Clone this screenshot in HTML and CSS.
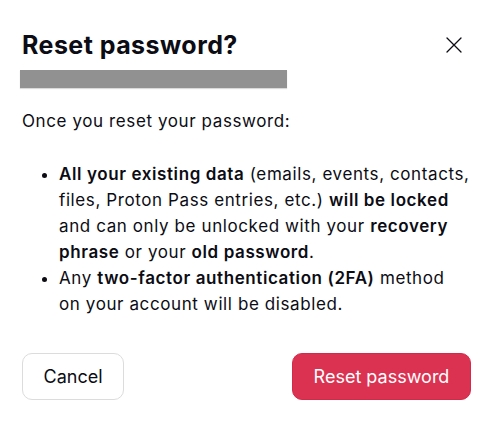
FILE: index.html
```html
<!DOCTYPE html>
<html lang="en">
<head>
<meta charset="utf-8">
<title>Reset password?</title>
<link rel="stylesheet" href="styles.css">
</head>
<body>
<div class="modal">
  <header class="modal-header">
    <div class="title-block">
      <h1 class="title">Reset password?</h1>
      <div class="redacted"></div>
    </div>
    <button class="close" aria-label="Close">
      <svg width="16" height="16" viewBox="0 0 16 16" fill="none" stroke="#0c0c14" stroke-width="1.3" stroke-linecap="round"><path d="M1 1L15 15M15 1L1 15"/></svg>
    </button>
  </header>
  <div class="modal-body">
    <p class="intro">Once you reset your password:</p>
    <ul class="list">
      <li><strong>All your existing data</strong> (emails, events, contacts, files, Proton Pass entries, etc.) <strong>will be locked</strong> and can only be unlocked with your <strong>recovery phrase</strong> or your <strong>old password</strong>.</li>
      <li>Any <strong>two-factor authentication (2FA)</strong> method on your account will be disabled.</li>
    </ul>
  </div>
  <footer class="modal-footer">
    <button class="btn btn-cancel">Cancel</button>
    <button class="btn btn-danger">Reset password</button>
  </footer>
</div>
</body>
</html>
```
FILE: styles.css
```css
* { box-sizing: border-box; }
html, body { margin: 0; padding: 0; background: #fff; }
body {
  font-family: Inter, "Noto Sans", sans-serif;
  color: #0c0c14;
  width: 500px;
  height: 424px;
  overflow: hidden;
}
.modal {
  padding: 29px 29px 0 22px;
}
.modal-header {
  display: flex;
  justify-content: space-between;
  align-items: flex-start;
}
.title {
  margin: 0;
  font-size: 25px;
  line-height: 32px;
  font-weight: 700;
  letter-spacing: 0.45px;
}
.redacted {
  margin: 9px 0 0 -2px;
  width: 267px;
  height: 18px;
  background: #919191;
  box-shadow: 0 1px 1px rgba(0,0,0,0.15);
}
.close {
  margin: 8px 9px 0 0;
  padding: 0;
  border: 0;
  background: none;
  width: 16px;
  height: 16px;
  display: flex;
}
.modal-body {
  font-size: 17px;
  letter-spacing: 0.6px;
  line-height: 26px;
  margin-top: 20px;
}
.intro { margin: 0 0 27px; }
.list {
  margin: 0 1px 0 0;
  padding-left: 37px;
}
.list strong { font-weight: 600; }
.modal-footer {
  display: flex;
  justify-content: space-between;
  margin-top: 36px;
}
.btn {
  font-family: Inter, "Noto Sans", sans-serif;
  font-size: 18px;
  height: 47px;
  padding: 0 20px;
  border-radius: 10px;
  cursor: pointer;
}
.btn-cancel {
  background: #fff;
  border: 1px solid #dcdcdc;
  color: #0c0c14;
  width: 102px;
}
.btn-danger {
  background: #dc3251;
  border: 1px solid #d42a49;
  color: #fff;
  width: 179px;
}
```
